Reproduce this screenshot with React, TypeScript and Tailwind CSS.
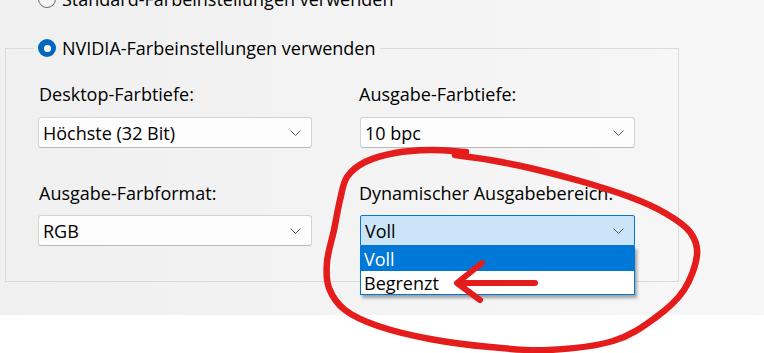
import React from "react";

const Chevron = () => (
  <svg width="11" height="6" viewBox="0 0 11 6" className="shrink-0">
    <polyline points="0.5,0.5 5.5,5.5 10.5,0.5" fill="none" stroke="#5a5a5a" strokeWidth="1" />
  </svg>
);

const Select = ({ value, active = false }: { value: string; active?: boolean }) => (
  <div
    className={
      active
        ? "h-[31px] flex items-center justify-between pl-[4px] pr-[10px] bg-[#cce4f7] border border-[#0078d7] rounded-t-[2px]"
        : "h-[31px] flex items-center justify-between pl-[4px] pr-[10px] bg-[#fdfdfd] border border-[#d3d3d3] border-b-[#b9b9b9] rounded-[3px]"
    }
  >
    <span className="text-[#000] leading-none">{value}</span>
    <Chevron />
  </div>
);

const pts: [number, number][] = [
  [466, 152], [430, 150], [395, 153], [365, 162], [347, 177], [340, 200], [334, 230], [327, 262],
  [329, 288], [345, 310], [378, 326], [430, 339], [490, 347], [548, 350], [613, 341], [655, 318],
  [684, 290], [697, 255], [690, 232], [665, 213], [630, 197], [580, 181], [530, 168], [490, 160],
  [455, 155],
];

function smooth(p: [number, number][]) {
  let d = `M${p[0][0]} ${p[0][1]}`;
  for (let i = 0; i < p.length - 1; i++) {
    const p0 = p[i - 1] || p[i];
    const p1 = p[i];
    const p2 = p[i + 1];
    const p3 = p[i + 2] || p2;
    const c1x = p1[0] + (p2[0] - p0[0]) / 6;
    const c1y = p1[1] + (p2[1] - p0[1]) / 6;
    const c2x = p2[0] - (p3[0] - p1[0]) / 6;
    const c2y = p2[1] - (p3[1] - p1[1]) / 6;
    d += ` C${c1x.toFixed(1)} ${c1y.toFixed(1)} ${c2x.toFixed(1)} ${c2y.toFixed(1)} ${p2[0]} ${p2[1]}`;
  }
  return d;
}

export default function App() {
  return (
    <div className="relative w-[764px] h-[353px] bg-white overflow-hidden font-['Open_Sans',sans-serif] text-[18px] text-black">
      <div className="h-[315px] bg-gradient-to-r from-[#f0f0f0] to-[#f7f7f7] overflow-hidden">
        {/* clipped top radio */}
        <div className="-mt-[13px] ml-[38px] h-[24px] flex items-center gap-[6px]">
          <span className="w-[18px] h-[18px] rounded-full border border-[#6a6a6a] bg-[#f7f7f7]" />
          <span className="leading-[24px]">Standard-Farbeinstellungen verwenden</span>
        </div>
        <fieldset className="mt-[25px] ml-[5px] w-[674px] h-[246px] border border-[#dadada] pl-[32px] pb-0">
          <legend className="-ml-[4px] px-[4px] h-[24px]">
            <div className="flex items-center gap-[6px] h-[24px]">
              <span className="w-[18px] h-[18px] rounded-full bg-[#0067c0] flex items-center justify-center">
                <span className="w-[7px] h-[7px] rounded-full bg-white" />
              </span>
              <span className="leading-[24px]">NVIDIA-Farbeinstellungen verwenden</span>
            </div>
          </legend>
          <div className="grid grid-cols-[274px_275px] gap-x-[48px] pt-[22px]">
            <div className="flex flex-col">
              <span className="leading-[24px] pl-px">Desktop-Farbtiefe:</span>
              <div className="mt-[11px]">
                <Select value="Höchste (32 Bit)" />
              </div>
            </div>
            <div className="flex flex-col">
              <span className="leading-[24px] -ml-px">Ausgabe-Farbtiefe:</span>
              <div className="mt-[11px]">
                <Select value="10 bpc" />
              </div>
            </div>
            <div className="flex flex-col mt-[33px]">
              <span className="leading-[24px] pl-px">Ausgabe-Farbformat:</span>
              <div className="mt-[10px]">
                <Select value="RGB" />
              </div>
            </div>
            <div className="flex flex-col mt-[33px]">
              <span className="leading-[24px] -ml-px">Dynamischer Ausgabebereich:</span>
              <div className="mt-[10px] relative">
                <Select value="Voll" active />
                <div className="absolute left-0 right-0 top-full z-10 bg-white border border-[#0078d7] shadow-[2px_3px_3px_rgba(0,0,0,0.35)]">
                  <div className="h-[24px] bg-[#0078d7] text-white pl-[3px] flex items-center leading-none">Voll</div>
                  <div className="h-[23px] pl-[3px] flex items-center leading-none">Begrenzt</div>
                </div>
              </div>
            </div>
          </div>
        </fieldset>
      </div>
      <svg className="absolute inset-0 z-20 pointer-events-none" width="764" height="353" viewBox="0 0 764 353">
        <path d={smooth(pts)} fill="none" stroke="#e41c1c" strokeWidth="6.5" strokeLinecap="round" strokeLinejoin="round" />
        <path d="M535 283 L458 283 M482 263 L457 283 L480 300" fill="none" stroke="#e41c1c" strokeWidth="6" strokeLinecap="round" strokeLinejoin="round" />
      </svg>
    </div>
  );
}
